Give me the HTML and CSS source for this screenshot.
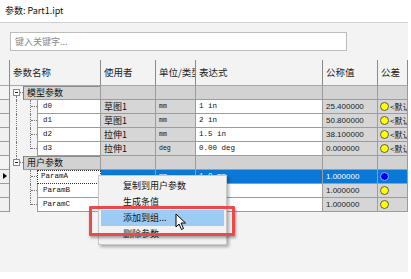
FILE: index.html
```html
<!DOCTYPE html>
<html lang="zh">
<head>
    <meta charset="UTF-8">
    <title>参数: Part1.ipt</title>
    <link rel="stylesheet" href="styles.css">
</head>
<body>
    <div class="title">参数: Part1.ipt</div>

    <div class="panel">
        <div class="search"><input type="text" placeholder="键入关键字..."></div>

        <div class="grid">
            <div class="row head">
                <div class="c rh"></div>
                <div class="c">参数名称</div>
                <div class="c">使用者</div>
                <div class="c">单位/类型</div>
                <div class="c">表达式</div>
                <div class="c">公称值</div>
                <div class="c">公差</div>
            </div>

            <div class="row group">
                <div class="c rh"></div>
                <div class="c name"><span class="gtree down"><i class="minus"></i></span><span class="glabel">模型参数</span></div>
                <div class="c"></div>
                <div class="c"></div>
                <div class="c"></div>
                <div class="c"></div>
                <div class="c"></div>
            </div>
            <div class="row">
                <div class="c rh"></div>
                <div class="c name"><span class="tree outer"></span><span class="nm">d0</span></div>
                <div class="c g cjk">草图1</div>
                <div class="c g unit">mm</div>
                <div class="c w mono">1 in</div>
                <div class="c g num">25.400000</div>
                <div class="c g tol"><i class="dot"></i>&lt;默认&gt;</div>
            </div>
            <div class="row">
                <div class="c rh"></div>
                <div class="c name"><span class="tree outer"></span><span class="nm">d1</span></div>
                <div class="c g cjk">草图1</div>
                <div class="c g unit">mm</div>
                <div class="c w mono">2 in</div>
                <div class="c g num">50.800000</div>
                <div class="c g tol"><i class="dot"></i>&lt;默认&gt;</div>
            </div>
            <div class="row">
                <div class="c rh"></div>
                <div class="c name"><span class="tree outer"></span><span class="nm">d2</span></div>
                <div class="c g cjk">拉伸1</div>
                <div class="c g unit">mm</div>
                <div class="c w mono">1.5 in</div>
                <div class="c g num">38.100000</div>
                <div class="c g tol"><i class="dot"></i>&lt;默认&gt;</div>
            </div>
            <div class="row">
                <div class="c rh"></div>
                <div class="c name"><span class="tree outer last"></span><span class="nm">d3</span></div>
                <div class="c g cjk">拉伸1</div>
                <div class="c g unit">deg</div>
                <div class="c w mono">0.00 deg</div>
                <div class="c g num">0.000000</div>
                <div class="c g tol"><i class="dot"></i>&lt;默认&gt;</div>
            </div>

            <div class="row group">
                <div class="c rh"></div>
                <div class="c name"><span class="gtree up"><i class="minus"></i></span><span class="glabel">用户参数</span></div>
                <div class="c"></div>
                <div class="c"></div>
                <div class="c"></div>
                <div class="c"></div>
                <div class="c"></div>
            </div>
            <div class="row sel">
                <div class="c rh"><i class="arrow"></i></div>
                <div class="c name"><span class="tree"></span><span class="nm focus">ParamA</span></div>
                <div class="c"></div>
                <div class="c unit">mm</div>
                <div class="c mono">1.0 mm</div>
                <div class="c num">1.000000</div>
                <div class="c tol"><i class="dot blue"></i></div>
            </div>
            <div class="row">
                <div class="c rh"></div>
                <div class="c name"><span class="tree"></span><span class="nm">ParamB</span></div>
                <div class="c w"></div>
                <div class="c w unit">mm</div>
                <div class="c w mono">1.0 mm</div>
                <div class="c g num">1.000000</div>
                <div class="c g tol"><i class="dot"></i></div>
            </div>
            <div class="row">
                <div class="c rh"></div>
                <div class="c name"><span class="tree last"></span><span class="nm">ParamC</span></div>
                <div class="c w"></div>
                <div class="c w unit">mm</div>
                <div class="c w mono">1.0 mm</div>
                <div class="c g num">1.000000</div>
                <div class="c g tol"><i class="dot"></i></div>
            </div>
        </div>
    </div>

    <!-- context menu, annotation and pointer lie over the grid -->
    <div class="menu">
        <div class="item">复制到用户参数</div>
        <div class="item">生成条值</div>
        <div class="item hot">添加到组...</div>
        <div class="item">删除参数</div>
    </div>
    <div class="mark"></div>
    <svg class="cursor" width="12" height="18" viewBox="0 0 12 18">
        <path d="M1 1 L1 14 L4 11 L6.5 16.5 L8.5 15.5 L6 10 L10.5 10 Z" fill="#fff" stroke="#000" stroke-width="1" stroke-linejoin="round"/>
    </svg>
</body>
</html>
```

FILE: styles.css
```css
body {
    margin: 0;
    background: #fff;
    font-family: "Noto Sans CJK SC", "Liberation Sans", sans-serif;
    color: #111;
    position: relative;
    width: 411px;
    height: 279px;
    overflow: hidden;
}

.title {
    height: 22px;
    line-height: 22px;
    padding-left: 5px;
    font-size: 9px;
    color: #111;
}

.panel {
    width: 408px;
    height: 250px;
    box-sizing: border-box;
    border-top: 1px solid #cfcfcf;
    background: #f3f3f3;
}

.search {
    padding: 9px 0 0 10px;
}

.search input {
    display: block;
    width: 337px;
    height: 19px;
    box-sizing: border-box;
    margin: 0;
    padding: 0 4px;
    border: 1px solid #bcbcbc;
    background: #fff;
    font-family: "Noto Sans CJK SC", sans-serif;
    font-size: 9px;
    outline: none;
}

.search input::placeholder {
    color: #8a8a8a;
}

.grid {
    margin-top: 9px;
}

.row {
    display: grid;
    grid-template-columns: 10px 91px 55px 40px 127px 55px 30px;
    height: 14px;
}

.c {
    box-sizing: border-box;
    border-right: 1px solid #9c9c9c;
    border-bottom: 1px solid #9c9c9c;
    padding-left: 3px;
    line-height: 13px;
    white-space: nowrap;
    overflow: hidden;
    font-size: 9px;
}

.rh {
    padding: 0;
    background: #f0f0f0;
    border-right-color: #8c8c8c;
    position: relative;
}

.head {
    height: 26px;
}

.head .c {
    line-height: 25px;
    font-size: 9.5px;
    color: #222;
    background: #f3f3f3;
    border-right-color: #8a8a8a;
    border-bottom-color: #a8a8a8;
}

.g {
    background: #d6d6d6;
}

.w {
    background: #fff;
}

.cjk {
    font-size: 9px;
}

.unit {
    font-family: "Liberation Mono", monospace;
    font-size: 6.5px;
}

.mono {
    font-family: "Liberation Mono", monospace;
    font-size: 7.5px;
}

.num {
    font-family: "Liberation Sans", sans-serif;
    font-size: 8px;
    color: #222;
}

.tol {
    padding-left: 2px;
    display: flex;
    align-items: center;
    gap: 1px;
    font-size: 8px;
}

.dot {
    flex: none;
    width: 9px;
    height: 9px;
    box-sizing: border-box;
    border-radius: 50%;
    background: #ffff00;
    border: 1px solid #5a5a5a;
}

.dot.blue {
    background: #0000f0;
    border-color: #8fb4ff;
}

/* name column with tree lines */
.name {
    display: flex;
    padding: 0;
    border: none;
}

.nm {
    flex: 1;
    background: #fff;
    color: #111;
    border-left: 1px solid #9c9c9c;
    border-right: 1px solid #9c9c9c;
    border-bottom: 1px solid #9c9c9c;
    padding-left: 5px;
    font-family: "Liberation Mono", monospace;
    font-size: 7.5px;
    line-height: 13px;
}

.nm.focus {
    border: 1px dotted #333;
    line-height: 11px;
    padding-left: 3px;
}

.tree {
    width: 20px;
    margin-left: 6px;
    border-left: 1px dotted transparent;
    position: relative;
}

.tree.outer {
    border-left-color: #777;
}

.tree::before {
    content: "";
    position: absolute;
    left: 13px;
    top: 0;
    bottom: 0;
    border-left: 1px dotted #777;
}

.tree.last::before {
    bottom: 7px;
}

.tree::after {
    content: "";
    position: absolute;
    left: 14px;
    top: 6px;
    width: 6px;
    border-top: 1px dotted #777;
}

.gtree {
    width: 13px;
    position: relative;
}

.gtree::after {
    content: "";
    position: absolute;
    left: 10px;
    top: 6px;
    width: 3px;
    border-top: 1px dotted #777;
}

.gtree.down::before,
.gtree.up::before {
    content: "";
    position: absolute;
    left: 6px;
    border-left: 1px dotted #777;
}

.gtree.down::before {
    top: 10px;
    bottom: 0;
}

.gtree.up::before {
    top: 0;
    height: 3px;
}

.minus {
    position: absolute;
    left: 3px;
    top: 3px;
    width: 7px;
    height: 7px;
    box-sizing: border-box;
    border: 1px solid #8a8a8a;
    background: #fff;
}

.minus::after {
    content: "";
    position: absolute;
    left: 1px;
    top: 2px;
    width: 3px;
    border-top: 1px solid #222;
}

.glabel {
    flex: 1;
    background: #d2d2d2;
    border-left: 1px solid #7c7c7c;
    border-right: 1px solid #9c9c9c;
    border-bottom: 1px solid #9c9c9c;
    box-shadow: inset 0 1px #8c8c8c;
    padding-left: 3px;
    font-size: 9px;
    line-height: 13px;
    color: #111;
}

.group .c {
    background: #d2d2d2;
}

.group .c.rh,
.group .c.name {
    background: none;
}

.group .rh {
    background: #f0f0f0;
}

.sel .c {
    background: #0a78d7;
    color: #fff;
}

.sel .c.rh {
    background: #f0f0f0;
}

.sel .c.name {
    background: none;
}

.arrow {
    position: absolute;
    left: 3px;
    top: 3px;
    border-left: 4px solid #000;
    border-top: 3.5px solid transparent;
    border-bottom: 3.5px solid transparent;
}

/* overlays */
.menu {
    position: absolute;
    left: 98px;
    top: 175px;
    width: 129px;
    height: 70px;
    box-sizing: border-box;
    padding: 2px;
    background: #f2f2f2;
    border: 1px solid #c8c8c8;
    box-shadow: 2px 2px 3px rgba(0, 0, 0, 0.3);
}

.item {
    height: 16px;
    line-height: 16px;
    padding-left: 22px;
    font-size: 9px;
    color: #111;
}

.item.hot {
    background: #9ccbf4;
}

.mark {
    position: absolute;
    left: 89px;
    top: 206px;
    width: 146px;
    height: 30px;
    box-sizing: border-box;
    border: 3px solid #ec4a4a;
    border-radius: 1px;
    box-shadow: 1px 2px 3px rgba(0, 0, 0, 0.35);
}

.cursor {
    position: absolute;
    left: 175px;
    top: 213px;
}
```
